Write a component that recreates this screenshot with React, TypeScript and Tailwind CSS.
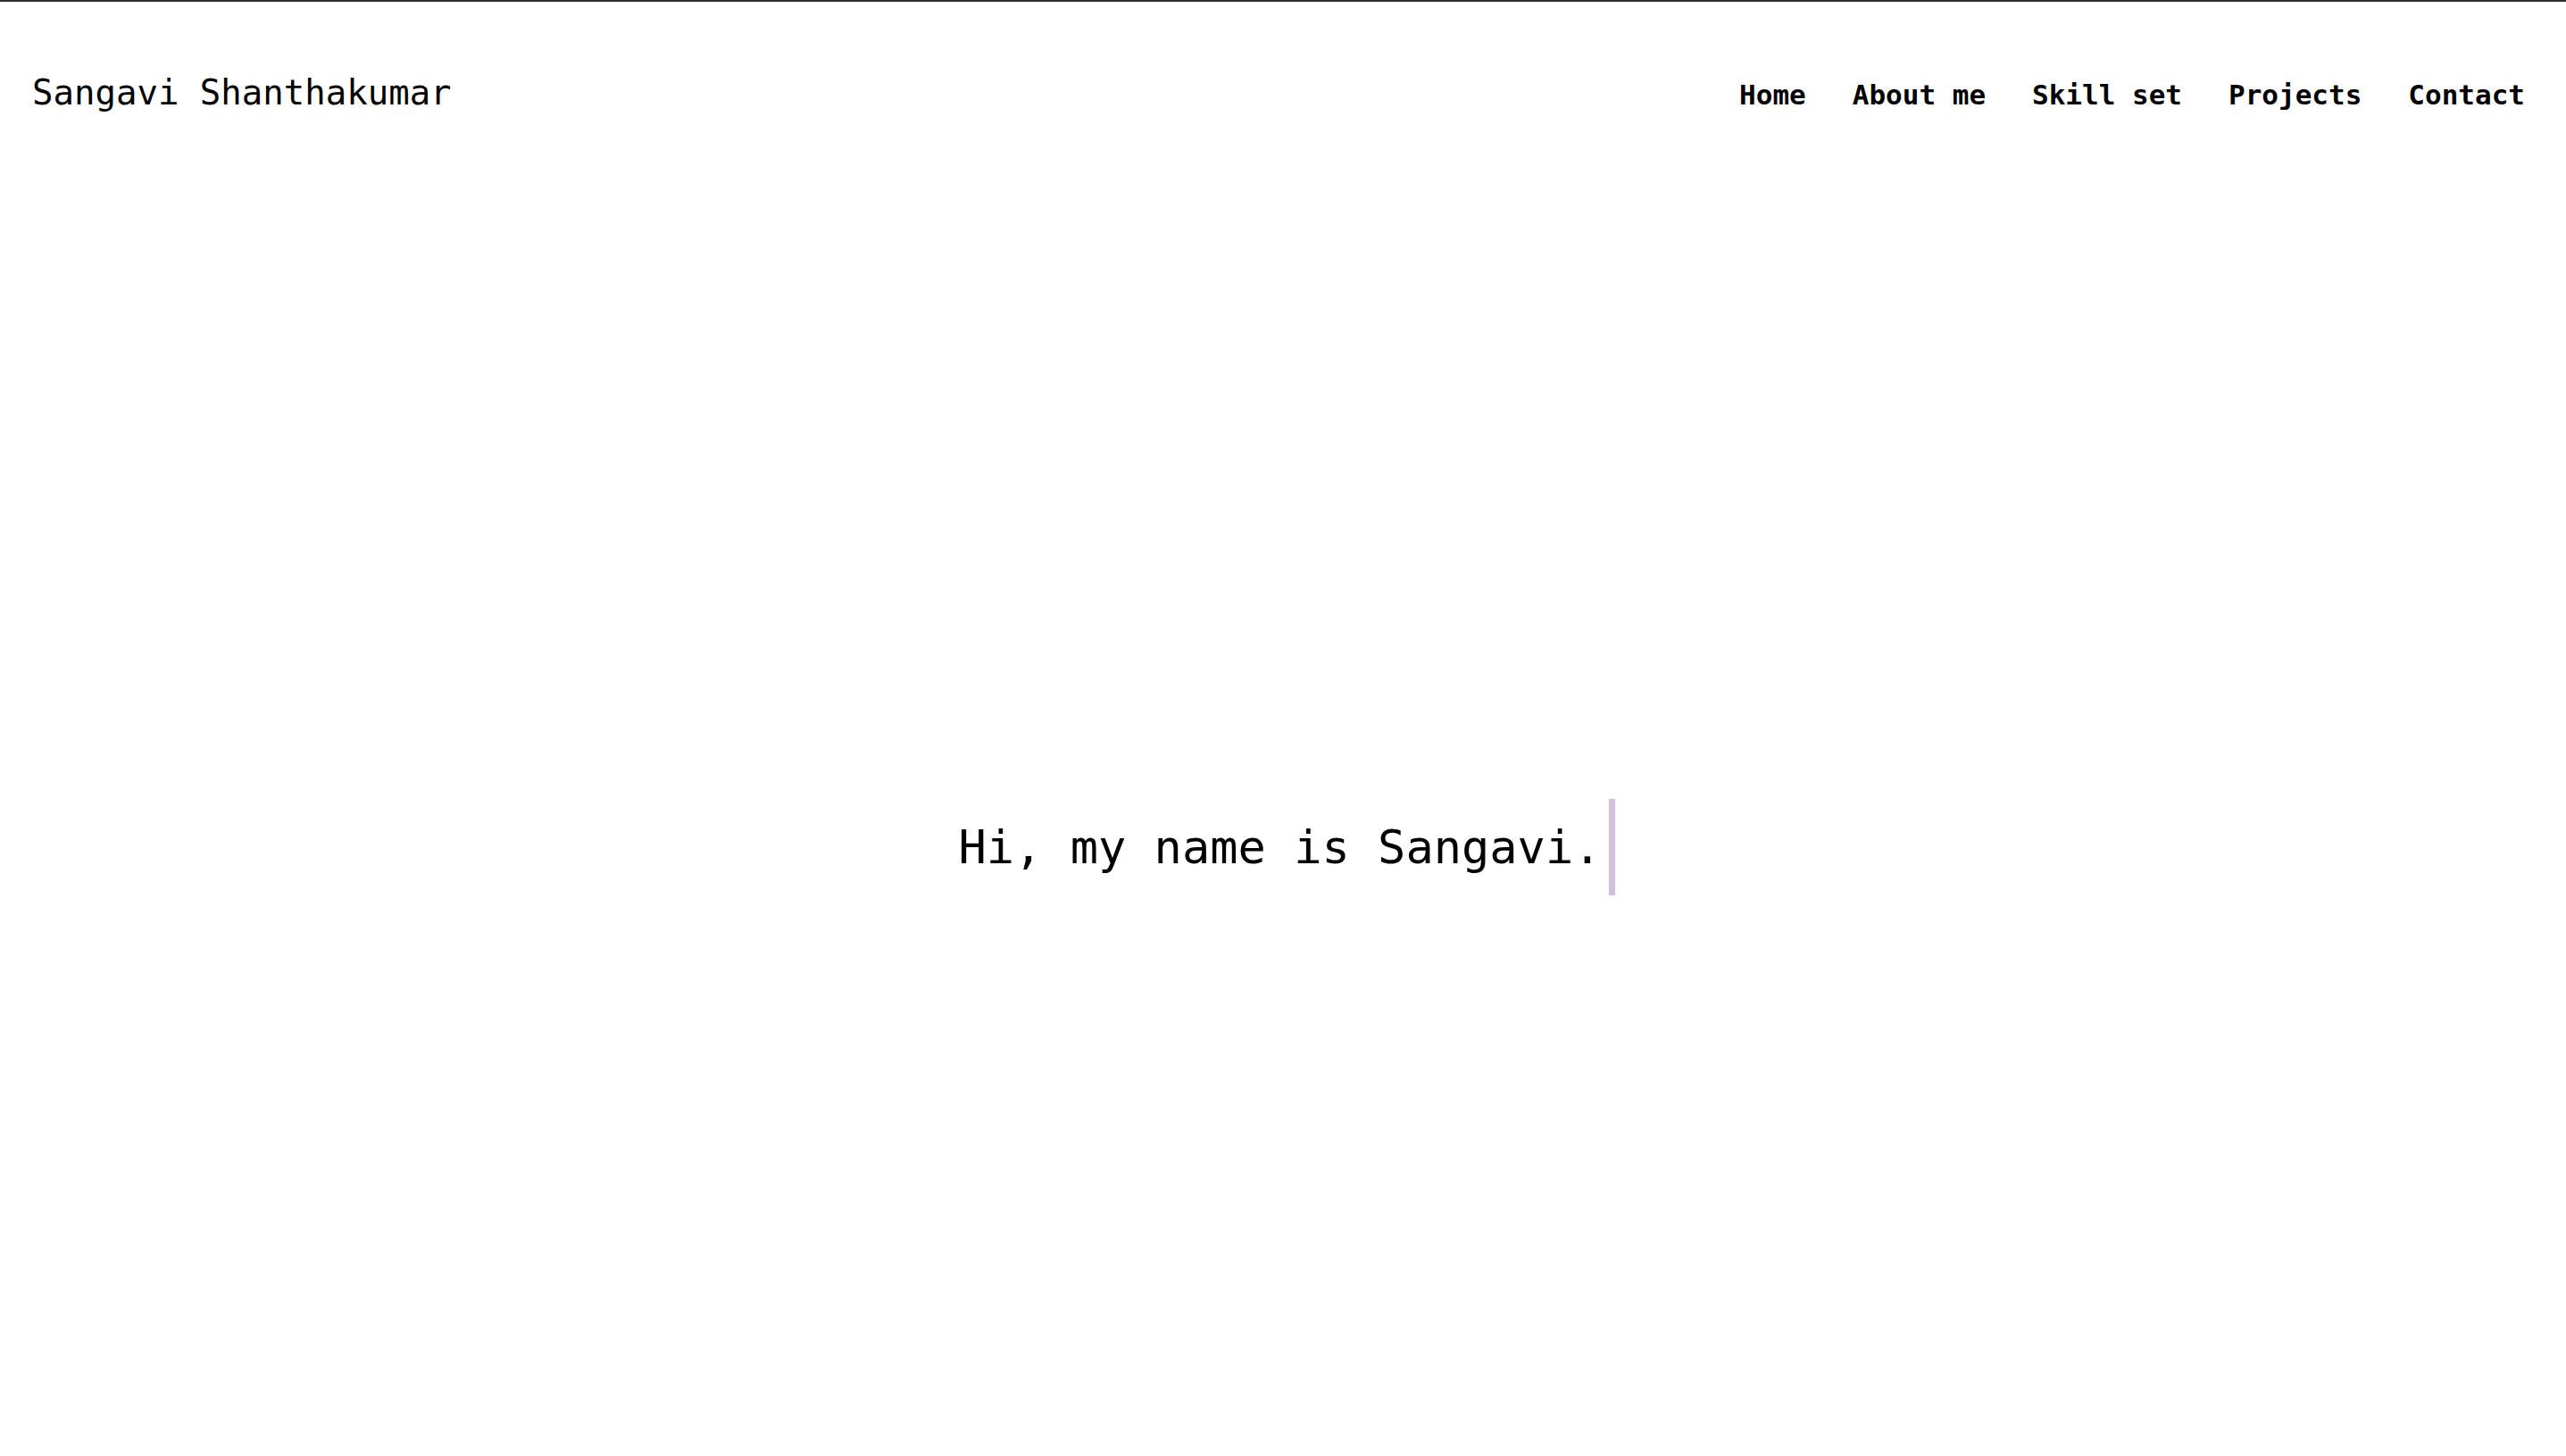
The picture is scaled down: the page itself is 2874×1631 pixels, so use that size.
const links = ['Home', 'About me', 'Skill set', 'Projects', 'Contact'];

export default function App() {
    return (
        <div className="min-h-screen bg-white text-black font-['DejaVu_Sans_Mono',monospace]">
            {/* top rule */}
            <div className="h-[2px] bg-[#2e2e2e]"></div>

            {/* Header */}
            <header className="flex items-baseline justify-between pl-[36px] pr-[46px] pt-[73px]">
                <a href="#" className="text-[39px]">
                    Sangavi Shanthakumar
                </a>
                <nav className="flex items-baseline gap-[52px]">
                    {links.map((link) => (
                        <a key={link} href="#" className="text-[31px] font-bold">
                            {link}
                        </a>
                    ))}
                </nav>
            </header>

            {/* Hero */}
            <section className="flex h-screen items-center justify-center">
                <h1 className="whitespace-pre border-r-[7px] border-[#d4bfdc] px-[8px] text-[52px] leading-[108px]">
                    Hi, my name is Sangavi.
                </h1>
            </section>
        </div>
    );
}
